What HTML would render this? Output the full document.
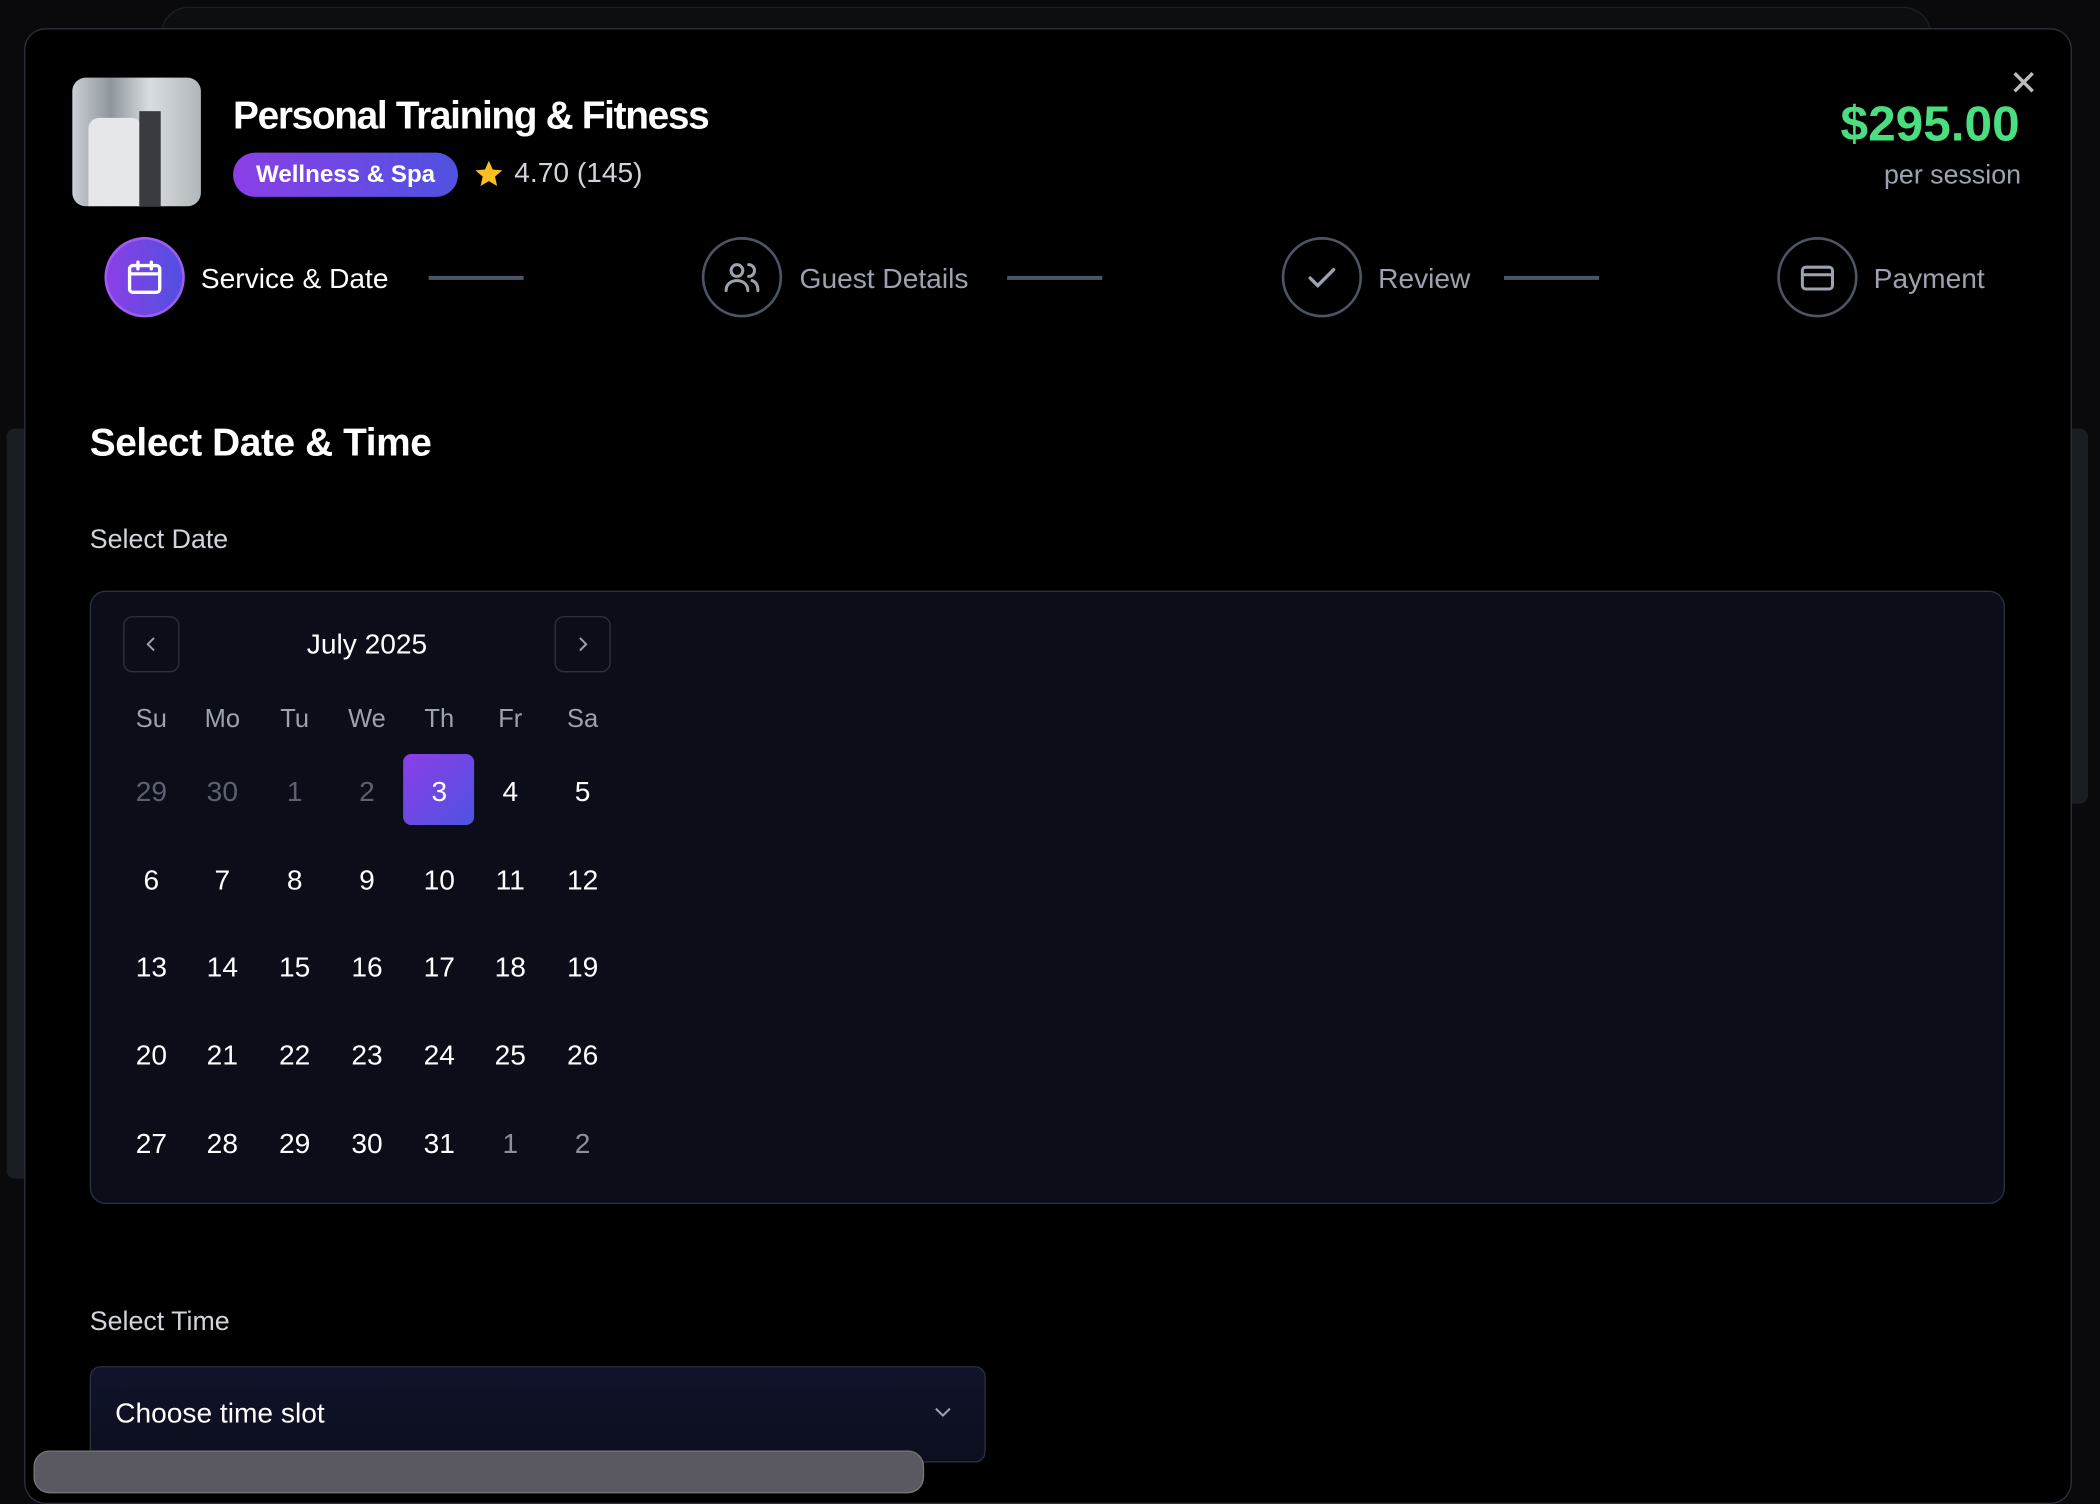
<!DOCTYPE html>
<html><head><meta charset="utf-8"><style>
html,body{margin:0;padding:0;background:#0a0a0c;overflow:hidden;width:2100px;height:1466px}
#w{position:absolute;left:0;top:0;width:1568px;height:1095px;transform:scale(1.3393);transform-origin:0 0;font-family:"Liberation Sans",sans-serif;color:#fff}
.a{position:absolute}
.modal{left:18px;top:21px;width:1527px;height:1100px;background:#000;border:1.5px solid #2b303b;border-radius:16px}
.circ{width:56px;height:56px;border-radius:50%;border:2px solid #4b5563;display:flex;align-items:center;justify-content:center}
.lbl{font-size:21px;color:#9ca3af;top:197px}
.line{height:3px;background:#4b5563;top:206px}
.d{position:absolute;width:54px;text-align:center;font-size:21px;transform:translateY(-11px)}
.g{color:#5b6170}
.g2{color:#8a8f9a}
.h{position:absolute;width:54px;text-align:center;font-size:19px;color:#9ca3af;top:527px}
</style></head><body><div id="w">
<div class="a" style="left:120px;top:5px;width:1320px;height:40px;border:1px solid #1c1f26;border-radius:30px;background:#0d0e12"></div>
<div class="a" style="left:5px;top:320px;width:14px;height:560px;background:#1a1d22;border-radius:6px 0 0 6px"></div>
<div class="a" style="left:1545px;top:320px;width:14px;height:280px;background:#1a1d22;border-radius:0 6px 6px 0"></div>
<div class="a modal"></div>
<div class="a" style="left:54px;top:58px;width:96px;height:96px;border-radius:10px;overflow:hidden;background:linear-gradient(90deg,#c9cfd4 0%,#8f969c 30%,#d8dde0 60%,#b1b6ba 100%)"><div class="a" style="left:12px;top:30px;width:40px;height:66px;background:#e5e7ea;border-radius:8px 8px 0 0"></div><div class="a" style="left:50px;top:25px;width:16px;height:71px;background:#3a3b40"></div></div>
<div class="a" style="left:174px;top:71px;font-size:29px;font-weight:bold;letter-spacing:-1px">Personal Training &amp; Fitness</div>
<div class="a" style="left:174px;top:114px;width:168px;height:33px;border-radius:17px;background:linear-gradient(90deg,#8b3fe6,#4f52e0);font-size:18px;font-weight:bold;line-height:33px;text-align:center">Wellness &amp; Spa</div>
<div class="a" style="left:353px;top:118px"><svg width="24" height="24" viewBox="0 0 24 24"><path d="M12 2l2.9 6.6 7.1.6-5.4 4.7 1.6 7L12 17.2 5.8 20.9l1.6-7L2 9.2l7.1-.6z" fill="#fbbf24"/></svg></div>
<div class="a" style="left:384px;top:118px;font-size:21px;color:#d1d5db">4.70 (145)</div>
<div class="a" style="left:1500px;top:47px;font-size:26px;color:#bbb">✕</div>
<div class="a" style="right:60px;top:72px;font-size:37px;font-weight:bold;color:#4ade80">$295.00</div>
<div class="a" style="right:59px;top:120px;font-size:20px;color:#9ca3af">per session</div>

<div class="a circ" style="left:78px;top:177px;border-color:#9f5cf0;background:linear-gradient(90deg,#8b3fe6,#5150e0)"><svg width="30" height="30" viewBox="0 0 24 24" fill="none" stroke="#fff" stroke-width="2" stroke-linecap="round"><rect x="3" y="5" width="18" height="16" rx="2"/><path d="M8 3v4M16 3v4M3 10h18"/></svg></div>
<div class="a lbl" style="left:150px;color:#fff">Service &amp; Date</div>
<div class="a line" style="left:320px;width:71px"></div>
<div class="a circ" style="left:524px;top:177px"><svg width="30" height="30" viewBox="0 0 24 24" fill="none" stroke="#9ca3af" stroke-width="1.8" stroke-linecap="round"><circle cx="9" cy="8" r="3.5"/><path d="M2.5 20c0-4 3-6 6.5-6s6.5 2 6.5 6M16 4.5a3.5 3.5 0 010 7M18 14c2 .6 3.5 2.5 3.5 6"/></svg></div>
<div class="a lbl" style="left:597px">Guest Details</div>
<div class="a line" style="left:752px;width:71px"></div>
<div class="a circ" style="left:957px;top:177px"><svg width="30" height="30" viewBox="0 0 24 24" fill="none" stroke="#9ca3af" stroke-width="2" stroke-linecap="round"><path d="M5 12.5l4.5 4.5L19 7.5"/></svg></div>
<div class="a lbl" style="left:1029px">Review</div>
<div class="a line" style="left:1123px;width:71px"></div>
<div class="a circ" style="left:1327px;top:177px"><svg width="30" height="30" viewBox="0 0 24 24" fill="none" stroke="#9ca3af" stroke-width="1.8"><rect x="3" y="6" width="18" height="13" rx="2"/><path d="M3 10.5h18"/></svg></div>
<div class="a lbl" style="left:1399px">Payment</div>

<div class="a" style="left:67px;top:315px;font-size:29px;font-weight:bold;letter-spacing:-0.3px">Select Date &amp; Time</div>
<div class="a" style="left:67px;top:392px;font-size:20px;color:#d1d5db">Select Date</div>
<div class="a" style="left:67px;top:441px;width:1428px;height:456px;background:#0b0d19;border:1.5px solid #2b3140;border-radius:12px"></div>
<div class="a" style="left:92px;top:460px;width:40px;height:40px;border:1px solid #2b3140;border-radius:7px;display:flex;align-items:center;justify-content:center"><svg width="16" height="16" viewBox="0 0 24 24" fill="none" stroke="#9ca3af" stroke-width="2.2"><path d="M15 5l-7 7 7 7"/></svg></div>
<div class="a" style="left:414px;top:460px;width:40px;height:40px;border:1px solid #2b3140;border-radius:7px;display:flex;align-items:center;justify-content:center"><svg width="16" height="16" viewBox="0 0 24 24" fill="none" stroke="#9ca3af" stroke-width="2.2"><path d="M9 5l7 7-7 7"/></svg></div>
<div class="a" style="left:174px;top:470px;width:200px;text-align:center;font-size:21px">July 2025</div>
<div class="h" style="left:86px">Su</div><div class="h" style="left:139px">Mo</div><div class="h" style="left:193px">Tu</div><div class="h" style="left:247px">We</div><div class="h" style="left:301px">Th</div><div class="h" style="left:354px">Fr</div><div class="h" style="left:408px">Sa</div>
<div class="a" style="left:301px;top:563px;width:53px;height:53px;border-radius:6px;background:linear-gradient(135deg,#8b3fe6,#4f52e0)"></div>
<div id="cal"></div>

<div class="a" style="left:67px;top:976px;font-size:20px;color:#d1d5db">Select Time</div>
<div class="a" style="left:67px;top:1020px;width:667px;height:70px;background:linear-gradient(#10132a,#0c0f1e);border:1.5px solid #2b3140;border-radius:8px"></div>
<div class="a" style="left:86px;top:1044px;font-size:21px">Choose time slot</div>
<div class="a" style="left:695px;top:1045px"><svg width="18" height="18" viewBox="0 0 24 24" fill="none" stroke="#9ca3af" stroke-width="2"><path d="M5 9l7 7 7-7"/></svg></div>
<div class="a" style="left:25px;top:1083px;width:663px;height:30px;border-radius:12px;background:#5a5860;border:1px solid #777"></div>
</div>
<script>
var xs=[86,139,193,247,301,354,408],ys=[591,657,722,788,854];
var days=[["29","30","1","2","3","4","5"],["6","7","8","9","10","11","12"],["13","14","15","16","17","18","19"],["20","21","22","23","24","25","26"],["27","28","29","30","31","1","2"]];
var h="";for(var r=0;r<5;r++)for(var c=0;c<7;c++){var cl=(r==0&&c<4)?' g':((r==4&&c>4)?' g2':'');h+='<div class="d'+cl+'" style="left:'+xs[c]+'px;top:'+ys[r]+'px">'+days[r][c]+'</div>';}
document.getElementById('cal').innerHTML=h;
</script>
</body></html>
